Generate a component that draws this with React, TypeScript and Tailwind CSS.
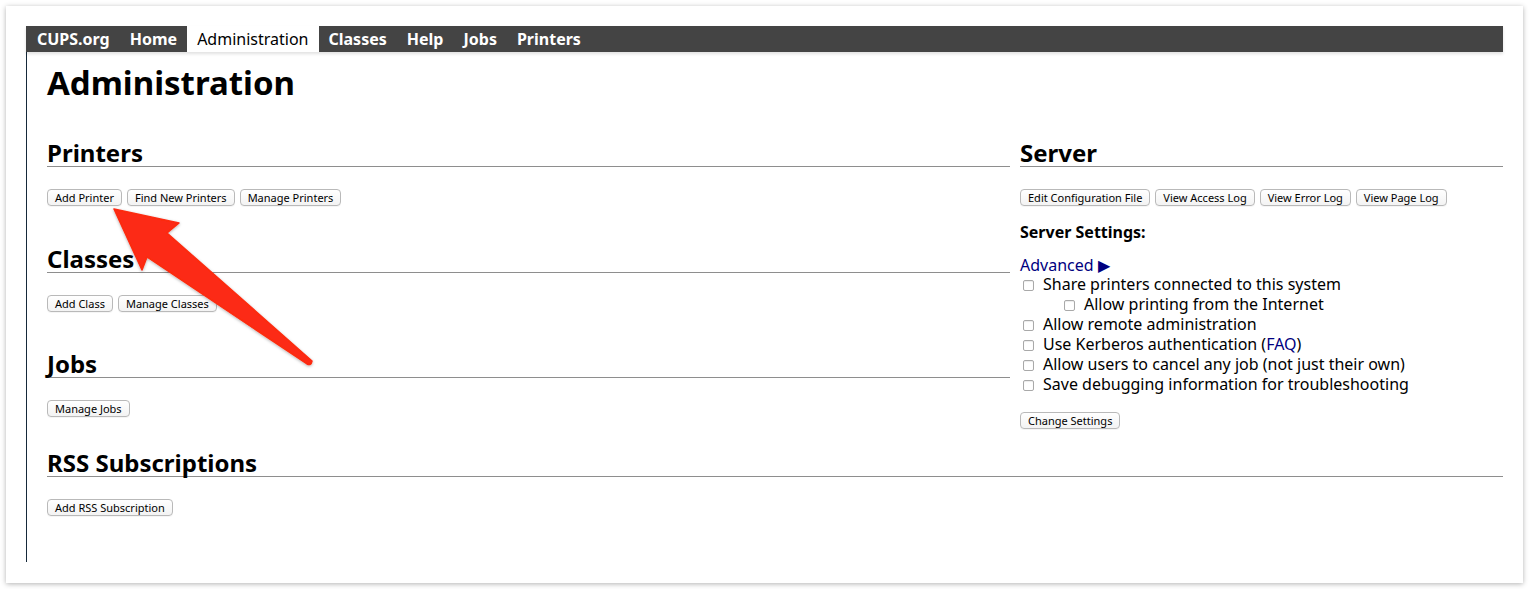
import React from 'react'

const font = "font-['Noto_Sans',sans-serif]"

const navItems = [
  { label: 'CUPS.org', active: false },
  { label: 'Home', active: false },
  { label: 'Administration', active: true },
  { label: 'Classes', active: false },
  { label: 'Help', active: false },
  { label: 'Jobs', active: false },
  { label: 'Printers', active: false },
]

const Btn: React.FC<{ label: string }> = ({ label }) => (
  <button className="h-[17px] px-[7px] rounded-[4px] border border-[#b9b9b9] bg-gradient-to-b from-white to-[#f3f3f3] text-[11px] leading-[15px] text-black shadow-[0_1px_0_rgba(0,0,0,0.04)]">
    {label}
  </button>
)

const Section: React.FC<{ title: string; buttons: string[]; className?: string }> = ({
  title,
  buttons,
  className = '',
}) => (
  <div className={className}>
    <h2 className="text-[24px] leading-[27px] font-bold border-b border-[#8e8e8e] text-black">{title}</h2>
    <div className="mt-[22px] flex gap-[5px]">
      {buttons.map((b) => (
        <Btn key={b} label={b} />
      ))}
    </div>
  </div>
)

const Check: React.FC<{ children: React.ReactNode; indent?: boolean }> = ({ children, indent }) => (
  <label className={`flex items-center h-[20px] ${indent ? 'pl-[44px]' : 'pl-[3px]'}`}>
    <span className="w-[11px] h-[11px] mt-[3px] rounded-[2px] border border-[#a9a9a9] bg-white shadow-[inset_0_1px_1px_rgba(0,0,0,0.08)] shrink-0" />
    <span className="ml-[9px] text-[16px] leading-[20px] text-black whitespace-nowrap">{children}</span>
  </label>
)

export default function App() {
  return (
    <div className={`relative w-[1529px] h-[589px] bg-white p-[6px] ${font}`}>
      <div className="h-[577px] bg-white shadow-[0_1px_5px_rgba(0,0,0,0.3)] px-[20px] pt-[20px]">
        {/* top menu */}
        <nav className="h-[26px] bg-[#444444] flex shadow-[0_2px_3px_rgba(0,0,0,0.12)] relative z-10">
          {navItems.map((n, i) => (
            <a
              key={n.label}
              className={`h-[26px] flex items-center text-[16px] ${i === 0 ? 'pl-[11px] pr-[10px]' : 'px-[10px]'} ${
                n.active ? 'bg-white text-black' : 'text-white font-bold'
              }`}
            >
              {n.label}
            </a>
          ))}
        </nav>

        <div className="h-[510px] border-l border-[#16293a] pl-[20px]">
          <h1 className="pt-[11px] text-[33px] leading-[40px] font-bold text-black">Administration</h1>

          <div className="mt-[36px] flex items-start gap-[10px]">
            <div className="w-[963px]">
              <Section title="Printers" buttons={['Add Printer', 'Find New Printers', 'Manage Printers']} />
              <Section className="mt-[39px]" title="Classes" buttons={['Add Class', 'Manage Classes']} />
              <Section className="mt-[38px]" title="Jobs" buttons={['Manage Jobs']} />
            </div>

            <div className="w-[483px]">
              <Section
                title="Server"
                buttons={['Edit Configuration File', 'View Access Log', 'View Error Log', 'View Page Log']}
              />
              <div className="mt-[16px] text-[16px] leading-[20px] font-bold text-black">Server Settings:</div>
              <div className="mt-[14px] text-[16px] leading-[18px] text-[#000080]">Advanced ▶</div>
              <Check>Share printers connected to this system</Check>
              <Check indent>Allow printing from the Internet</Check>
              <Check>Allow remote administration</Check>
              <Check>
                Use Kerberos authentication (<a className="text-[#000080]">FAQ</a>)
              </Check>
              <Check>Allow users to cancel any job (not just their own)</Check>
              <Check>Save debugging information for troubleshooting</Check>
              <div className="mt-[13px]">
                <Btn label="Change Settings" />
              </div>
            </div>
          </div>

          <Section className="mt-[18px]" title="RSS Subscriptions" buttons={['Add RSS Subscription']} />
        </div>
      </div>

      {/* annotation arrow */}
      <svg className="absolute left-0 top-0 pointer-events-none" width="1529" height="589" viewBox="0 0 1529 589">
        <defs>
          <filter id="sh" x="-20%" y="-20%" width="140%" height="140%">
            <feDropShadow dx="0" dy="1" stdDeviation="1.5" floodColor="#000" floodOpacity="0.3" />
          </filter>
        </defs>
        <path
          d="M114 209 L179 223 L167 233 L312 361 Q311 366 307 364 L147 257 L142 270 Z"
          fill="#fc2b12"
          stroke="#fc2b12"
          strokeWidth="1.5"
          strokeLinejoin="round"
          filter="url(#sh)"
        />
      </svg>
    </div>
  )
}
